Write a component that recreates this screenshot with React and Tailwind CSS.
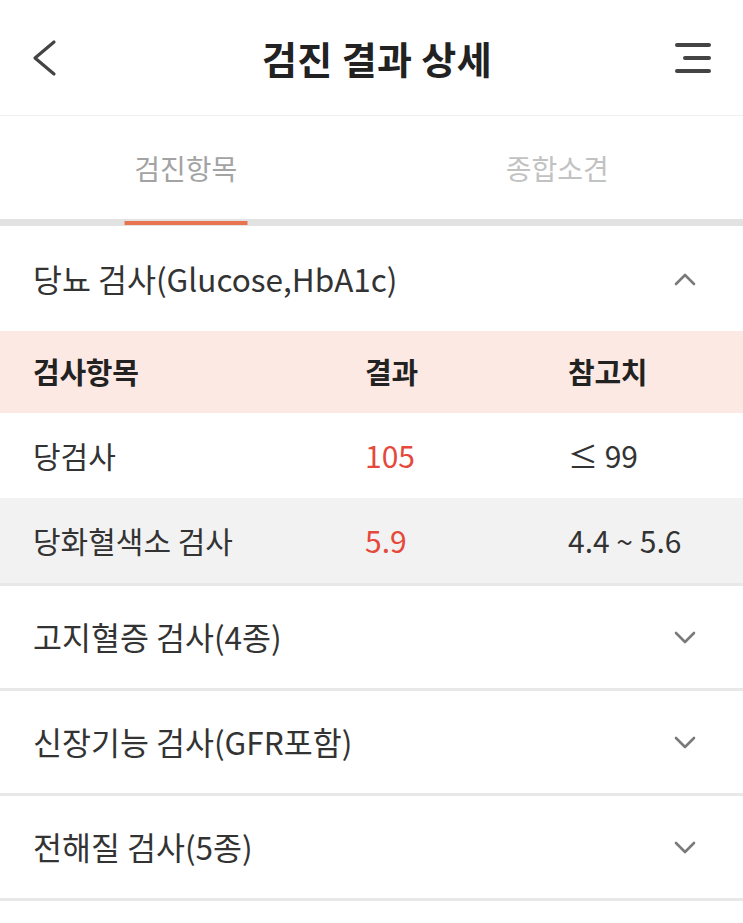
import { useState } from 'react';

const font = { fontFamily: '"Noto Sans CJK KR", "Noto Sans", sans-serif' };

const Chevron = ({ up }) => (
  <svg width="24" height="16" viewBox="0 0 24 16" fill="none">
    <polyline
      points={up ? '3,13 12,4 21,13' : '3,4 12,13 21,4'}
      stroke="#7a7a7a"
      strokeWidth="2.6"
      strokeLinecap="round"
      strokeLinejoin="round"
    />
  </svg>
);

const rows = [
  { name: '당검사', value: '105', ref: '≤ 99' },
  { name: '당화혈색소 검사', value: '5.9', ref: '4.4 ~ 5.6' },
];

const sections = ['고지혈증 검사(4종)', '신장기능 검사(GFR포함)', '전해질 검사(5종)'];

export default function App() {
  const [tab, setTab] = useState(0);

  return (
    <div className="w-[743px] min-h-[923px] bg-white text-[#333]" style={font}>
      {/* Header */}
      <header className="h-[116px] flex items-center justify-between px-[30px] border-b border-[#f0f0f0]">
        <div className="w-[53px]">
          <svg width="30" height="40" viewBox="0 0 30 40" fill="none">
            <polyline points="24,4 5,20 24,36" stroke="#444" strokeWidth="3.2" strokeLinecap="round" strokeLinejoin="round" />
          </svg>
        </div>
        <h1 className="text-[38px] font-bold text-[#222] tracking-[0.01em] leading-none">검진 결과 상세</h1>
        <svg width="40" height="40" viewBox="0 0 40 40" fill="none" className="mr-[2px]">
          <line x1="6" y1="7" x2="38" y2="7" stroke="#444" strokeWidth="4" strokeLinecap="round" />
          <line x1="14" y1="20" x2="38" y2="20" stroke="#444" strokeWidth="4" strokeLinecap="round" />
          <line x1="6" y1="33" x2="38" y2="33" stroke="#444" strokeWidth="4" strokeLinecap="round" />
        </svg>
      </header>

      {/* Tabs */}
      <div className="flex border-b-[7px] border-[#e2e2e2]">
        {['검진항목', '종합소견'].map((t, i) => (
          <button
            key={t}
            onClick={() => setTab(i)}
            className="relative flex-1 h-[103px] flex items-center justify-center"
          >
            <span className={`text-[28px] ${i === 0 ? 'text-[#a3a3a3]' : 'text-[#c2c2c2]'}`}>{t}</span>
            {tab === i && <span className="absolute left-1/2 -translate-x-1/2 -bottom-[6px] w-[123px] h-[4px] bg-[#e8744f]" />}
          </button>
        ))}
      </div>

      {/* Open section */}
      <div className="border-b-[3px] border-[#e8e8e8]">
        <div className="h-[105px] flex items-center justify-between pl-[33px] pr-[46px]">
          <span className="text-[31.5px]">당뇨 검사(Glucose,HbA1c)</span>
          <Chevron up />
        </div>
        <div className="grid grid-cols-[332px_203px_1fr] items-center h-[82px] px-[33px] bg-[#fde9e3] text-[29px] font-bold text-[#222] tracking-[-0.01em]">
          <span>검사항목</span>
          <span>결과</span>
          <span>참고치</span>
        </div>
        {rows.map((r, i) => (
          <div
            key={r.name}
            className={`grid grid-cols-[332px_203px_1fr] items-center h-[85px] px-[33px] text-[30px] ${i === 1 ? 'bg-[#f2f2f2]' : 'bg-white'}`}
          >
            <span>{r.name}</span>
            <span className="text-[#e4493b]">{r.value}</span>
            <span className="text-[#333]">{r.ref}</span>
          </div>
        ))}
      </div>

      {/* Collapsed sections */}
      {sections.map((s) => (
        <div key={s} className="h-[105px] flex items-center justify-between pl-[33px] pr-[46px] border-b-[3px] border-[#e8e8e8]">
          <span className="text-[31.5px]">{s}</span>
          <Chevron />
        </div>
      ))}
    </div>
  );
}
